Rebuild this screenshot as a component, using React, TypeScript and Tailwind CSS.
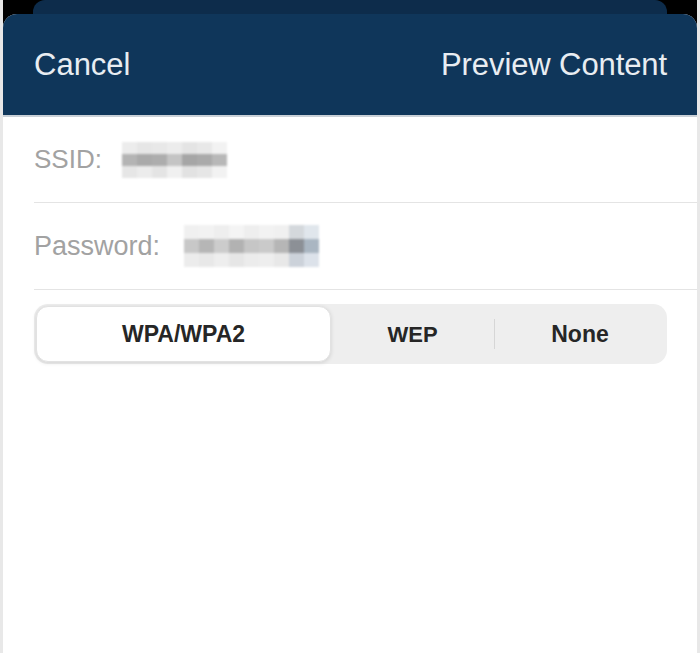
import React from 'react';

const ssidMosaic = [
  ['#ececec', '#e6e6e6', '#e8e8e8', '#ececec', '#e4e4e4', '#e8e8e8', '#f2f2f2'],
  ['#b4b4b4', '#aaaaaa', '#adadad', '#c4c4c4', '#a6a6a6', '#aaaaaa', '#b8b8b8'],
  ['#e6e6e6', '#ececec', '#e4e4e4', '#f0f0f0', '#e2e2e2', '#e6e6e6', '#f2f2f2'],
];

const passwordMosaic = [
  ['#f0f0f0', '#f2f2f2', '#eeeeee', '#f4f4f4', '#eeeeee', '#f2f2f2', '#f0f0f0', '#d4d8dc', '#e0e6ec'],
  ['#c8c8c8', '#b6b6b6', '#cccccc', '#b2b2b2', '#c6c6c6', '#cacaca', '#b6b6b6', '#8c9096', '#aab6c2'],
  ['#ececec', '#e8e8e8', '#eeeeee', '#e6e6e6', '#ececec', '#eeeeee', '#e8e8e8', '#ccd2da', '#dce2ea'],
];

const Mosaic: React.FC<{ cells: string[][]; cellW: number; cellH: number }> = ({ cells, cellW, cellH }) => (
  <div className="flex flex-col blur-[1px]">
    {cells.map((row, i) => (
      <div key={i} className="flex">
        {row.map((c, j) => (
          <div key={j} style={{ width: cellW, height: cellH, background: c }} />
        ))}
      </div>
    ))}
  </div>
);

const App: React.FC = () => {
  return (
    <div
      className="w-[700px] h-[653px] bg-black border-x-[3px] border-[#e8e8e8] flex flex-col overflow-hidden"
      style={{ fontFamily: '"Liberation Sans", Arial, sans-serif' }}
    >
      {/* card stacked behind */}
      <div className="h-[14px] px-[30px] shrink-0">
        <div className="h-full bg-[#0d2c4b] rounded-t-[12px]" />
      </div>

      {/* sheet */}
      <div className="flex-1 bg-white rounded-t-[14px] overflow-hidden flex flex-col">
        {/* Header */}
        <div className="h-[103px] bg-[#0f365a] border-b-2 border-[#c9d0d7] flex items-center justify-between pl-[31px] pr-[30px] shrink-0">
          <button className="text-[31px] text-[#e8edf2] leading-none">Cancel</button>
          <button className="text-[31px] text-[#e8edf2] leading-none tracking-[-0.1px]">Preview Content</button>
        </div>

        {/* Fields */}
        <div className="ml-[31px] h-[86px] border-b border-[#e4e4e4] flex items-center gap-[20px]">
          <span className="text-[26px] text-[#a2a2a2]">SSID:</span>
          <Mosaic cells={ssidMosaic} cellW={15} cellH={12} />
        </div>
        <div className="ml-[31px] h-[87px] border-b border-[#e4e4e4] flex items-center gap-[24px]">
          <span className="text-[27px] text-[#a2a2a2]">Password:</span>
          <Mosaic cells={passwordMosaic} cellW={15} cellH={14} />
        </div>

        {/* Security type */}
        <div className="ml-[31px] mr-[30px] mt-[14px] h-[60px] bg-[#eeeeee] rounded-[14px] p-[2px] flex items-center">
          <div className="w-[295px] h-full bg-white rounded-[12px] border border-[#e2e2e2] shadow-[0_1px_4px_rgba(0,0,0,0.12)] flex items-center justify-center text-[23px] font-bold text-[#262626]">
            WPA/WPA2
          </div>
          <div className="w-[163px] h-full flex items-center justify-center text-[22px] font-bold text-[#262626]">
            WEP
          </div>
          <div className="w-px h-[30px] bg-[#d6d6d6]" />
          <div className="flex-1 h-full flex items-center justify-center text-[23px] font-bold text-[#262626]">
            None
          </div>
        </div>
      </div>
    </div>
  );
};

export default App;
